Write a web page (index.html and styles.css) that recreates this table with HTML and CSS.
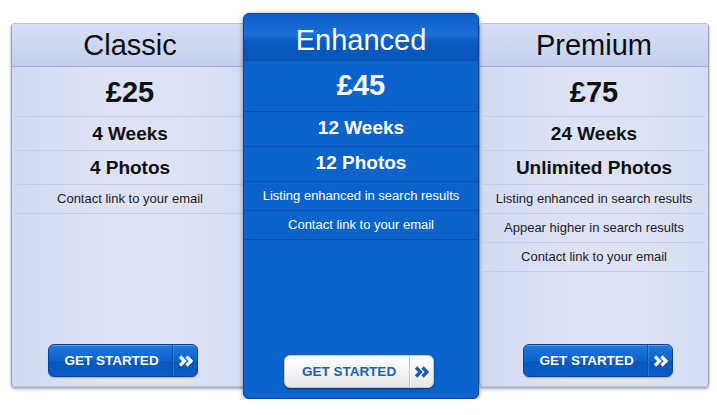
FILE: index.html
```html
<!DOCTYPE html>
<html lang="en">
<head>
    <meta charset="UTF-8">
    <title>Pricing Plans</title>
    <link rel="stylesheet" href="styles.css">
</head>
<body>
    <div class="plans">
        <div class="plan plan-side plan-left">
            <div class="plan-name">Classic</div>
            <ul class="features">
                <li class="price">£25</li>
                <li class="big">4 Weeks</li>
                <li class="big">4 Photos</li>
                <li>Contact link to your email</li>
            </ul>
            <div class="plan-action">
                <a class="btn" href="#">
                    <span class="btn-label">GET STARTED</span>
                    <span class="btn-arrow">
                        <svg width="15" height="12" viewBox="0 0 15 12"><polyline points="2,1.5 6.5,6 2,10.5"/><polyline points="8.5,1.5 13,6 8.5,10.5"/></svg>
                    </span>
                </a>
            </div>
        </div>

        <div class="plan plan-featured">
            <div class="plan-name">Enhanced</div>
            <ul class="features">
                <li class="price">£45</li>
                <li class="big">12 Weeks</li>
                <li class="big">12 Photos</li>
                <li>Listing enhanced in search results</li>
                <li>Contact link to your email</li>
            </ul>
            <div class="plan-action">
                <a class="btn btn-light" href="#">
                    <span class="btn-label">GET STARTED</span>
                    <span class="btn-arrow">
                        <svg width="15" height="12" viewBox="0 0 15 12"><polyline points="2,1.5 6.5,6 2,10.5"/><polyline points="8.5,1.5 13,6 8.5,10.5"/></svg>
                    </span>
                </a>
            </div>
        </div>

        <div class="plan plan-side plan-right">
            <div class="plan-name">Premium</div>
            <ul class="features">
                <li class="price">£75</li>
                <li class="big">24 Weeks</li>
                <li class="big">Unlimited Photos</li>
                <li>Listing enhanced in search results</li>
                <li>Appear higher in search results</li>
                <li>Contact link to your email</li>
            </ul>
            <div class="plan-action">
                <a class="btn" href="#">
                    <span class="btn-label">GET STARTED</span>
                    <span class="btn-arrow">
                        <svg width="15" height="12" viewBox="0 0 15 12"><polyline points="2,1.5 6.5,6 2,10.5"/><polyline points="8.5,1.5 13,6 8.5,10.5"/></svg>
                    </span>
                </a>
            </div>
        </div>
    </div>
</body>
</html>
```

FILE: styles.css
```css
body {
    margin: 0;
    background: #fff;
    font-family: "Liberation Sans", Arial, sans-serif;
}

.plans {
    display: flex;
    align-items: flex-start;
    padding-left: 11px;
}

.plan {
    display: flex;
    flex-direction: column;
    box-sizing: border-box;
}

.plan-side {
    height: 364px;
    margin-top: 23px;
    background: linear-gradient(90deg, #d3daf0, #dde3f4 40%, #dde3f4 70%, #d6ddf1);
    border: 1px solid #b9c2dc;
    border-left-color: #98a3c2;
    border-radius: 4px;
    box-shadow: 0 2px 3px rgba(60, 60, 70, 0.45);
    color: #111;
}

.plan-left {
    width: 238px;
}

.plan-right {
    width: 230px;
    border-right-color: #9aa3bb;
}

.plan-featured {
    position: relative;
    z-index: 1;
    width: 236px;
    height: 386px;
    margin-top: 13px;
    margin-left: -6px;
    background: #0a64cc;
    border: 1px solid #0747a3;
    border-radius: 6px;
    box-shadow: 0 1px 4px rgba(0, 30, 80, 0.5);
    color: #fff;
}

.plan-name {
    height: 42px;
    line-height: 42px;
    text-align: center;
    font-size: 29px;
    color: #0c0c12;
    border-bottom: 1px solid #a3aecd;
    background: linear-gradient(#d8def3, #cdd6ef 60%, #c4cdea);
}

.plan-featured .plan-name {
    height: 46px;
    line-height: 53px;
    color: #fff;
    border-bottom-color: #0a4ea9;
    border-radius: 5px 5px 0 0;
    background: linear-gradient(#0d5ec8, #1a6fd6 45%, #0a5ac0 60%, #0655bb);
}

.features {
    list-style: none;
    margin: 0 3px;
    padding: 0;
}

.features li {
    height: 28px;
    line-height: 28px;
    text-align: center;
    font-size: 13px;
    color: #1c1c28;
    border-bottom: 1px solid #c5cce4;
}

.features li.price {
    height: 49px;
    line-height: 50px;
    font-size: 29px;
    font-weight: bold;
    color: #111;
}

.features li.big {
    height: 33px;
    line-height: 33px;
    font-size: 19px;
    font-weight: bold;
    color: #111;
}

.plan-featured .features {
    margin: 0;
}

.plan-featured .features li {
    color: #fff;
    border-bottom-color: #0a50ab;
}

.plan-featured .features li.price {
    height: 50px;
    line-height: 48px;
}

.plan-featured .features li.big {
    height: 34px;
    line-height: 32px;
}

.plan-action {
    margin-top: auto;
    padding-bottom: 9px;
    display: flex;
    justify-content: center;
}

.plan-left .plan-action {
    padding-right: 14px;
}

.plan-right .plan-action {
    padding-left: 8px;
}

.plan-featured .plan-action {
    padding-bottom: 10px;
    padding-right: 4px;
}

.btn {
    display: flex;
    align-items: stretch;
    width: 150px;
    height: 33px;
    box-sizing: border-box;
    text-decoration: none;
    border: 1px solid #0845a0;
    border-radius: 6px;
    background: linear-gradient(#1f78dc, #0d62cc 50%, #0556bd 55%, #0a5cc4);
    box-shadow: inset 0 1px rgba(255, 255, 255, 0.25), 0 1px 1px rgba(0, 0, 0, 0.25);
    color: #fff;
}

.btn-label {
    width: 121px;
    padding-left: 2px;
    line-height: 31px;
    text-align: center;
    font-size: 13.5px;
    font-weight: bold;
}

.btn-arrow {
    flex: 1;
    display: flex;
    align-items: center;
    justify-content: center;
    border-left: 1px solid #0a4faa;
    box-shadow: inset 1px 0 rgba(255, 255, 255, 0.15);
}

.btn-arrow svg polyline {
    fill: none;
    stroke: #fff;
    stroke-width: 3.2;
}

.btn-light {
    border-color: #c9c9c9;
    background: linear-gradient(#ffffff, #f4f4f4 50%, #e6e6e6);
    box-shadow: 0 1px 2px rgba(0, 0, 0, 0.45);
    color: #2360b4;
}

.btn-light .btn-label {
    width: 120px;
    padding-left: 4px;
}

.btn-light .btn-arrow {
    border-left-color: #c2c2c2;
    box-shadow: inset 1px 0 #fff;
}

.btn-light .btn-arrow svg polyline {
    stroke: #1c55aa;
}
```
